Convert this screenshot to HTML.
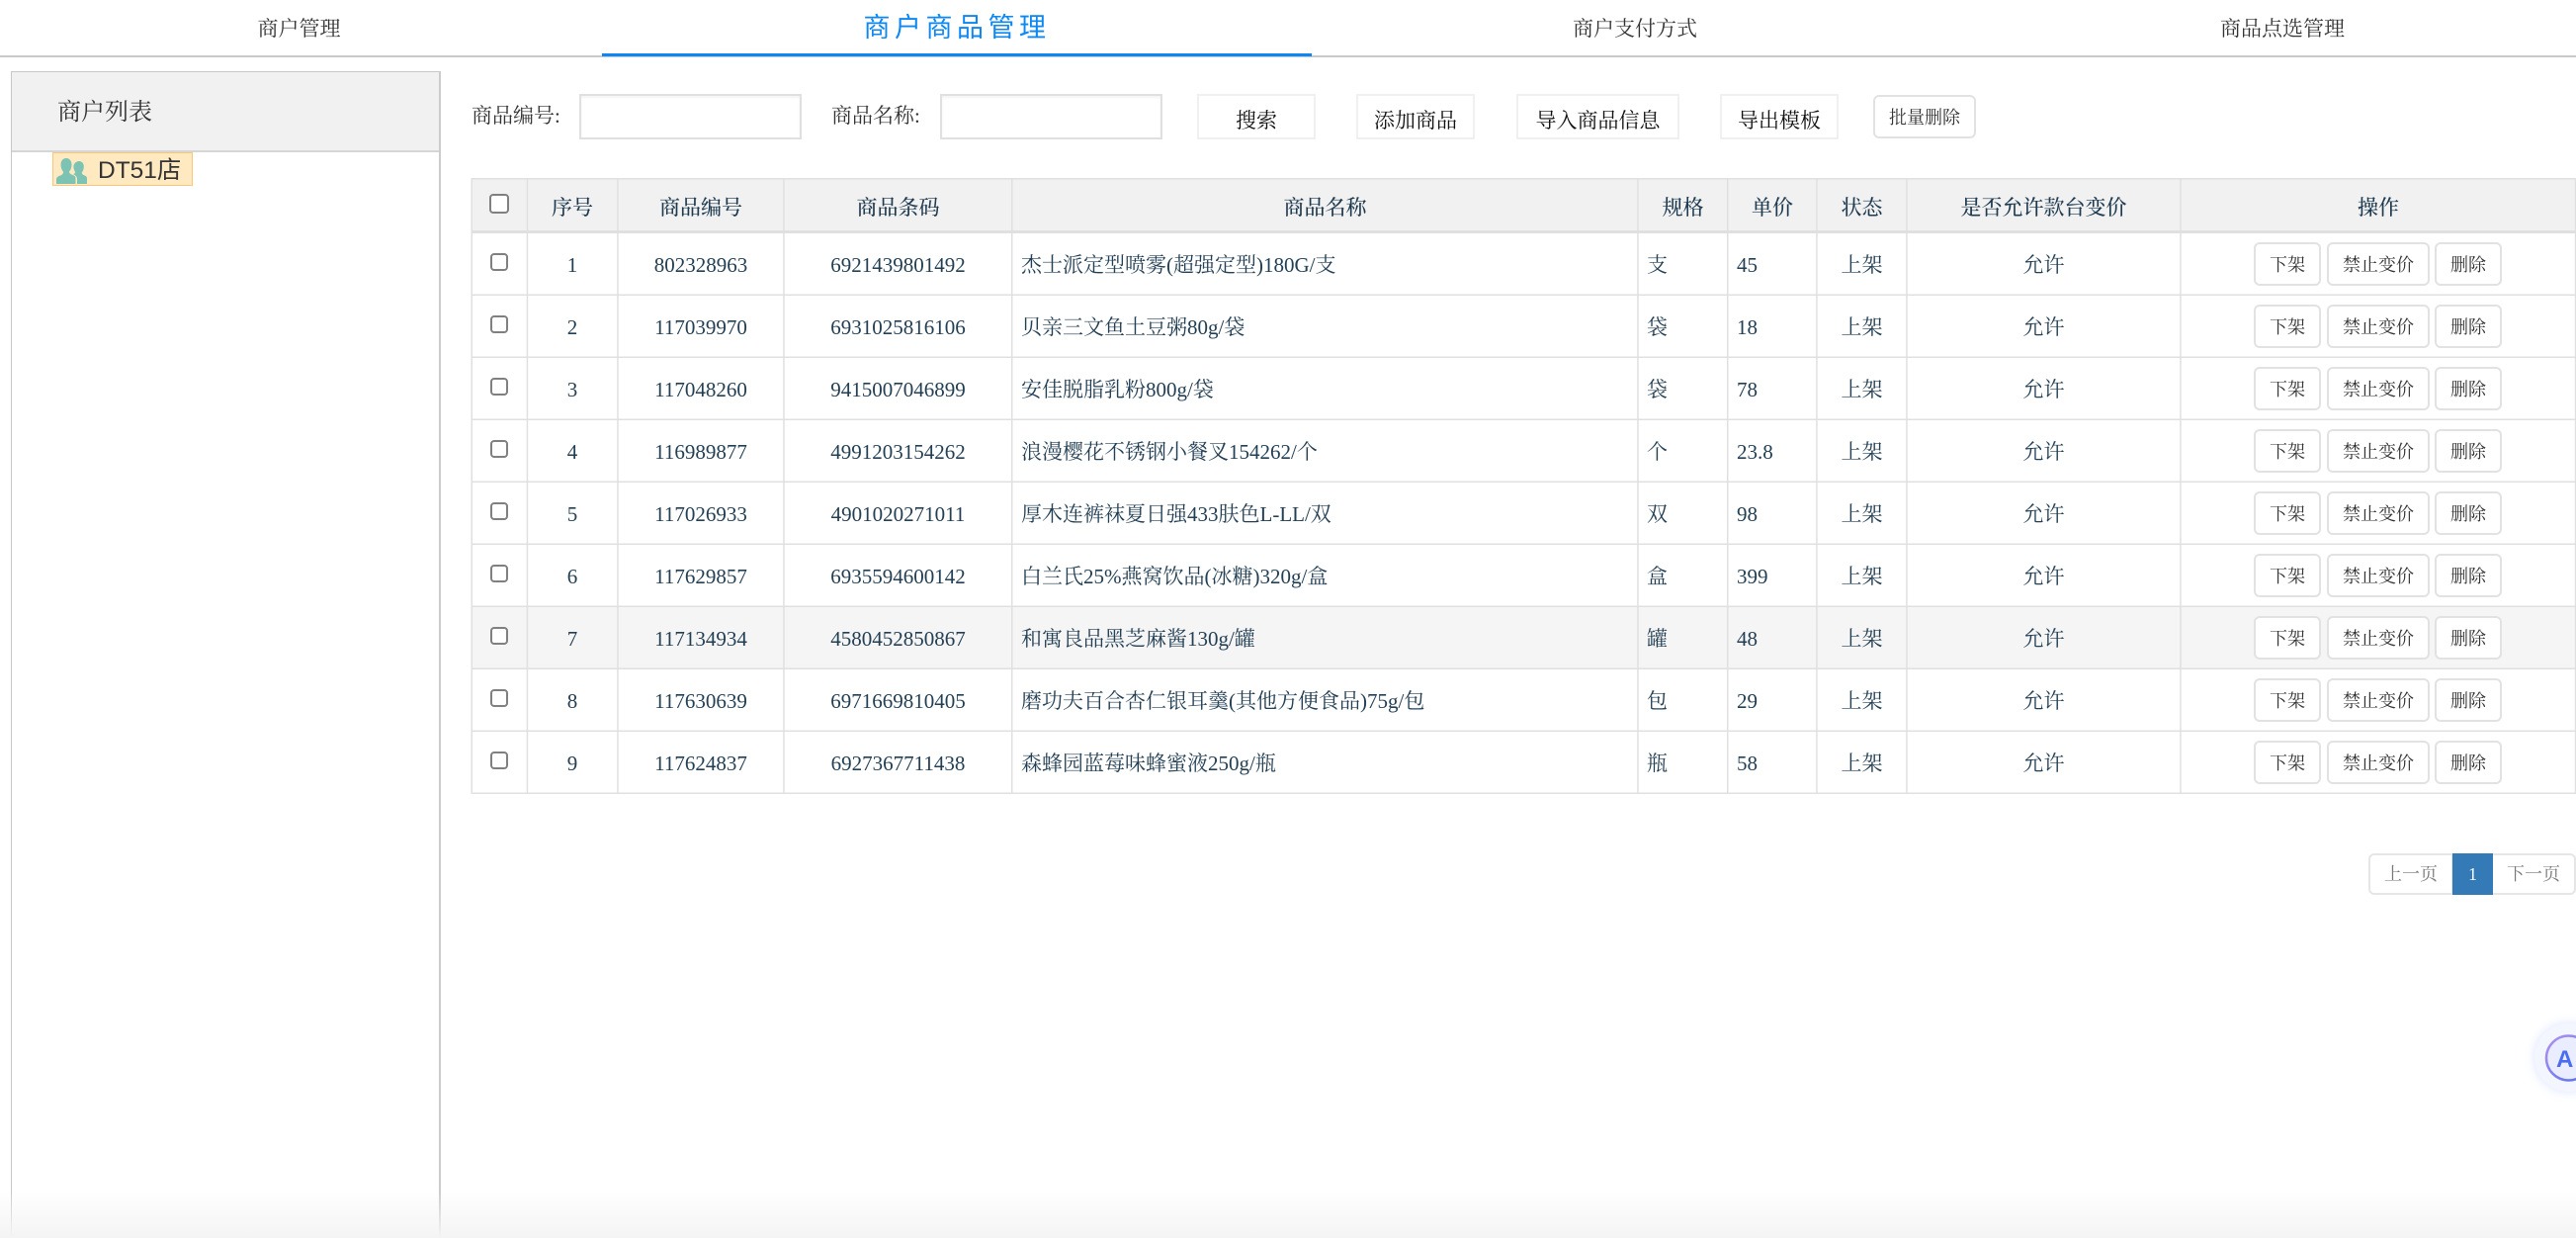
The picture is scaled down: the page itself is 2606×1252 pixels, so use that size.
<!DOCTYPE html>
<html lang="zh-CN">
<head>
<meta charset="utf-8">
<title>商户商品管理</title>
<style>
html,body{margin:0;padding:0;background:#fff;width:2606px;height:1252px;overflow:hidden}
#page{position:absolute;left:0;top:0;width:2606px;height:1252px;overflow:hidden;font-family:"Liberation Serif","Noto Serif CJK SC",serif;color:#222}
.a{position:absolute;white-space:nowrap}
.tab{top:0;height:55px;line-height:58px;text-align:center;font-size:21px;color:#333}
.navline{left:0;top:56px;width:2606px;height:1.5px;background:#c9c9cc}
.active{left:609px;width:718px;top:0;height:54px;line-height:56px;text-align:center;font-family:"Liberation Sans","Noto Sans CJK SC",sans-serif;font-size:27px;letter-spacing:4.5px;color:#0d88f2}
.bar{left:609px;top:54px;width:718px;height:3px;background:#0d88f2}
.panel{left:11px;top:72px;width:435px;height:1190px;border:1px solid #c8c8c8;border-right:2px solid #cccccc;box-sizing:border-box;background:#fff}
.phead{left:12px;top:73px;width:432px;height:81px;background:#f1f1f1;border-bottom:2px solid #d6d6d6;line-height:82px;font-size:24px;color:#333;padding-left:46px;box-sizing:border-box}
.node{left:53px;top:154px;width:142px;height:34px;box-sizing:border-box;background:#ffe9c1;border:1.5px solid #fcc679}
.nodet{left:99px;top:154px;height:34px;line-height:37px;font-family:"Liberation Sans","Noto Sans CJK SC",sans-serif;font-size:24.5px;color:#333}
.lab{top:102px;height:30px;line-height:30px;font-size:21px;color:#333}
.inp{top:95px;width:225px;height:46px;box-sizing:border-box;border:2px solid #e0e0e0;background:#fff;box-shadow:inset 0 2px 2px rgba(0,0,0,.05)}
.b1{top:95px;height:46px;box-sizing:border-box;border:2px solid #f0f0f0;background:#fff;text-align:center;line-height:50px;font-size:21px;color:#111}
.b2{box-sizing:border-box;border:2px solid #e2e2e2;border-radius:6px;background:#fff;text-align:center;font-size:18px;color:#333;display:inline-block;vertical-align:top}
table{position:absolute;left:477px;top:180px;width:2129px;table-layout:fixed;border-collapse:separate;border-spacing:0;font-size:21px;color:#233f54}
th,td{padding:0;text-align:center;font-weight:normal;white-space:nowrap;overflow:hidden}
th{height:49px;background:#f1f1f1;font-weight:500;color:#1e3a50;line-height:49px;padding-top:6px}
td{height:60px;line-height:60px;padding-top:3px}
td.l{text-align:left;padding-left:9px}
tr.h td{background:#f5f5f5}
.cb{display:inline-block;box-sizing:border-box;border:2px solid #808080;border-radius:4px;background:#fff;vertical-align:top}
.cb.s{width:18px;height:18px;margin-top:18px;margin-right:1px}
.cb.t{width:20px;height:20px;margin-top:10px;margin-right:1px}
td.op{font-size:0;text-align:left;padding-left:74px}
td.op .b2{height:44px;line-height:42px;margin-top:7px;margin-right:6px}
td.op .w2{margin-right:5px}
.w1{width:68px}.w2{width:104px}
svg.grid{position:absolute;left:0;top:0}
.pg{top:863px;height:42px;box-sizing:border-box;background:#fff;border:2px solid #e6e6e6;text-align:center;line-height:38px;font-size:18px;color:#777}
.fade{left:0;top:1205px;width:2606px;height:47px;background:linear-gradient(to bottom,rgba(244,244,244,0),#f4f4f4);pointer-events:none}
.ai{left:2564px;top:1035px;width:69px;height:69px;border-radius:50%;background:#f3f6ff;box-shadow:0 0 10px rgba(130,155,255,.28)}
.ait{left:2586px;top:1056px;font-family:"Liberation Sans",sans-serif;font-weight:bold;font-size:24px;line-height:32px;letter-spacing:1px;color:#4a6cf0}
</style>
</head>
<body>
<div id="page">
<div class="a tab" style="left:0;width:605px">商户管理</div>
<div class="a tab" style="left:1327px;width:654px">商户支付方式</div>
<div class="a tab" style="left:1981px;width:656px">商品点选管理</div>
<div class="a navline"></div>
<div class="a active">商户商品管理</div>
<div class="a bar"></div>

<div class="a panel"></div>
<div class="a phead">商户列表</div>
<div class="a node"></div>
<svg class="a" style="left:57px;top:159px" width="31" height="27" viewBox="0 0 31 27"><path fill="#7cc3b4" d="M10 1c3.500 0 5.500 3 5.500 6.500 0 3-1 5.500-2.500 7 0 1.500 1 2.500 3 3.200 2 .8 3.500 1.500 3.500 3.500V27H0v-4.500c0-2.300 2-3.300 4-4 2-.8 3-1.800 3-3.800C5.500 13 4.500 10.500 4.500 7.500 4.500 4 6.500 1 10 1z"/><path fill="#7cc3b4" d="M23 4c3 0 4.800 2.500 4.800 5.500 0 2.500-.8 4.500-2 6 0 1.500 1 2.200 2.400 2.800 1.500.6 2.800 1.300 2.800 3V27H21v-5c0-2.400-1.500-3.800-3.800-4.800 1-.6 1.800-1.200 2-2-1-1.500-1.800-3.300-1.800-5.700C17.400 6.500 20 4 23 4z"/></svg>
<div class="a nodet">DT51店</div>

<div class="a lab" style="left:477px">商品编号:</div>
<div class="a inp" style="left:586px"></div>
<div class="a lab" style="left:841px">商品名称:</div>
<div class="a inp" style="left:951px"></div>
<div class="a b1" style="left:1211px;width:120px">搜索</div>
<div class="a b1" style="left:1372px;width:120px">添加商品</div>
<div class="a b1" style="left:1534px;width:165px">导入商品信息</div>
<div class="a b1" style="left:1740px;width:120px">导出模板</div>
<div class="a b2" style="left:1895px;top:96px;width:104px;height:44px;line-height:42px">批量删除</div>

<table>
<colgroup><col style="width:56px"><col style="width:92px"><col style="width:168px"><col style="width:231px"><col style="width:633px"><col style="width:91px"><col style="width:90px"><col style="width:91px"><col style="width:277px"><col style="width:400px"></colgroup>
<thead><tr><th><span class="cb t"></span></th><th>序号</th><th>商品编号</th><th>商品条码</th><th>商品名称</th><th>规格</th><th>单价</th><th>状态</th><th>是否允许款台变价</th><th>操作</th></tr></thead>
<tbody>
<tr><td><span class="cb s"></span></td><td>1</td><td>802328963</td><td>6921439801492</td><td class="l">杰士派定型喷雾(超强定型)180G/支</td><td class="l">支</td><td class="l">45</td><td>上架</td><td>允许</td><td class="op"><span class="b2 w1">下架</span><span class="b2 w2">禁止变价</span><span class="b2 w1">删除</span></td></tr>
<tr><td><span class="cb s"></span></td><td>2</td><td>117039970</td><td>6931025816106</td><td class="l">贝亲三文鱼土豆粥80g/袋</td><td class="l">袋</td><td class="l">18</td><td>上架</td><td>允许</td><td class="op"><span class="b2 w1">下架</span><span class="b2 w2">禁止变价</span><span class="b2 w1">删除</span></td></tr>
<tr><td><span class="cb s"></span></td><td>3</td><td>117048260</td><td>9415007046899</td><td class="l">安佳脱脂乳粉800g/袋</td><td class="l">袋</td><td class="l">78</td><td>上架</td><td>允许</td><td class="op"><span class="b2 w1">下架</span><span class="b2 w2">禁止变价</span><span class="b2 w1">删除</span></td></tr>
<tr><td><span class="cb s"></span></td><td>4</td><td>116989877</td><td>4991203154262</td><td class="l">浪漫樱花不锈钢小餐叉154262/个</td><td class="l">个</td><td class="l">23.8</td><td>上架</td><td>允许</td><td class="op"><span class="b2 w1">下架</span><span class="b2 w2">禁止变价</span><span class="b2 w1">删除</span></td></tr>
<tr><td><span class="cb s"></span></td><td>5</td><td>117026933</td><td>4901020271011</td><td class="l">厚木连裤袜夏日强433肤色L-LL/双</td><td class="l">双</td><td class="l">98</td><td>上架</td><td>允许</td><td class="op"><span class="b2 w1">下架</span><span class="b2 w2">禁止变价</span><span class="b2 w1">删除</span></td></tr>
<tr><td><span class="cb s"></span></td><td>6</td><td>117629857</td><td>6935594600142</td><td class="l">白兰氏25%燕窝饮品(冰糖)320g/盒</td><td class="l">盒</td><td class="l">399</td><td>上架</td><td>允许</td><td class="op"><span class="b2 w1">下架</span><span class="b2 w2">禁止变价</span><span class="b2 w1">删除</span></td></tr>
<tr class="h"><td><span class="cb s"></span></td><td>7</td><td>117134934</td><td>4580452850867</td><td class="l">和寓良品黑芝麻酱130g/罐</td><td class="l">罐</td><td class="l">48</td><td>上架</td><td>允许</td><td class="op"><span class="b2 w1">下架</span><span class="b2 w2">禁止变价</span><span class="b2 w1">删除</span></td></tr>
<tr><td><span class="cb s"></span></td><td>8</td><td>117630639</td><td>6971669810405</td><td class="l">磨功夫百合杏仁银耳羹(其他方便食品)75g/包</td><td class="l">包</td><td class="l">29</td><td>上架</td><td>允许</td><td class="op"><span class="b2 w1">下架</span><span class="b2 w2">禁止变价</span><span class="b2 w1">删除</span></td></tr>
<tr><td><span class="cb s"></span></td><td>9</td><td>117624837</td><td>6927367711438</td><td class="l">森蜂园蓝莓味蜂蜜液250g/瓶</td><td class="l">瓶</td><td class="l">58</td><td>上架</td><td>允许</td><td class="op"><span class="b2 w1">下架</span><span class="b2 w2">禁止变价</span><span class="b2 w1">删除</span></td></tr>
</tbody>
</table>

<svg class="grid" width="2606" height="1252" viewBox="0 0 2606 1252">
<g fill="#e0e0e0">
<rect x="476.500" y="180" width="2129.500" height="1.500"/>
<rect x="476.500" y="233" width="2129.500" height="3"/>
<rect x="476.500" y="297.500" width="2129.500" height="1.500"/>
<rect x="476.500" y="360.500" width="2129.500" height="1.500"/>
<rect x="476.500" y="423.500" width="2129.500" height="1.500"/>
<rect x="476.500" y="486.500" width="2129.500" height="1.500"/>
<rect x="476.500" y="549.500" width="2129.500" height="1.500"/>
<rect x="476.500" y="612.500" width="2129.500" height="1.500"/>
<rect x="476.500" y="675.500" width="2129.500" height="1.500"/>
<rect x="476.500" y="738.500" width="2129.500" height="1.500"/>
<rect x="476.500" y="801.500" width="2129.500" height="1.500"/>
<rect x="476.500" y="180" width="1.500" height="623"/>
<rect x="532.700" y="180" width="1.500" height="623"/>
<rect x="624.200" y="180" width="1.500" height="623"/>
<rect x="792.200" y="180" width="1.500" height="623"/>
<rect x="1023" y="180" width="1.500" height="623"/>
<rect x="1656.200" y="180" width="1.500" height="623"/>
<rect x="1747" y="180" width="1.500" height="623"/>
<rect x="1837.200" y="180" width="1.500" height="623"/>
<rect x="1928.200" y="180" width="1.500" height="623"/>
<rect x="2205.200" y="180" width="1.500" height="623"/>
<rect x="2604.800" y="180" width="1.500" height="623"/>
</g>
</svg>

<div class="a pg" style="left:2396px;width:86px;border-radius:6px 0 0 6px">上一页</div>
<div class="a pg" style="left:2481px;width:41px;background:#337ab7;border-color:#337ab7;color:#fff">1</div>
<div class="a pg" style="left:2522px;width:84px;border-radius:0 6px 6px 0;border-left:0">下一页</div>

<div class="a ai"></div>
<svg class="a" style="left:2570px;top:1042px" width="36" height="57" viewBox="0 0 36 57"><defs><linearGradient id="g" x1="0" y1="0" x2="1" y2="1"><stop offset="0" stop-color="#b493ee"/><stop offset="1" stop-color="#4f6ef2"/></linearGradient></defs><circle cx="28.500" cy="28" r="22.500" fill="#e9edff" stroke="url(#g)" stroke-width="2.500"/></svg>
<div class="a ait">Ai</div>

<div class="a fade"></div>
</div>
</body>
</html>
